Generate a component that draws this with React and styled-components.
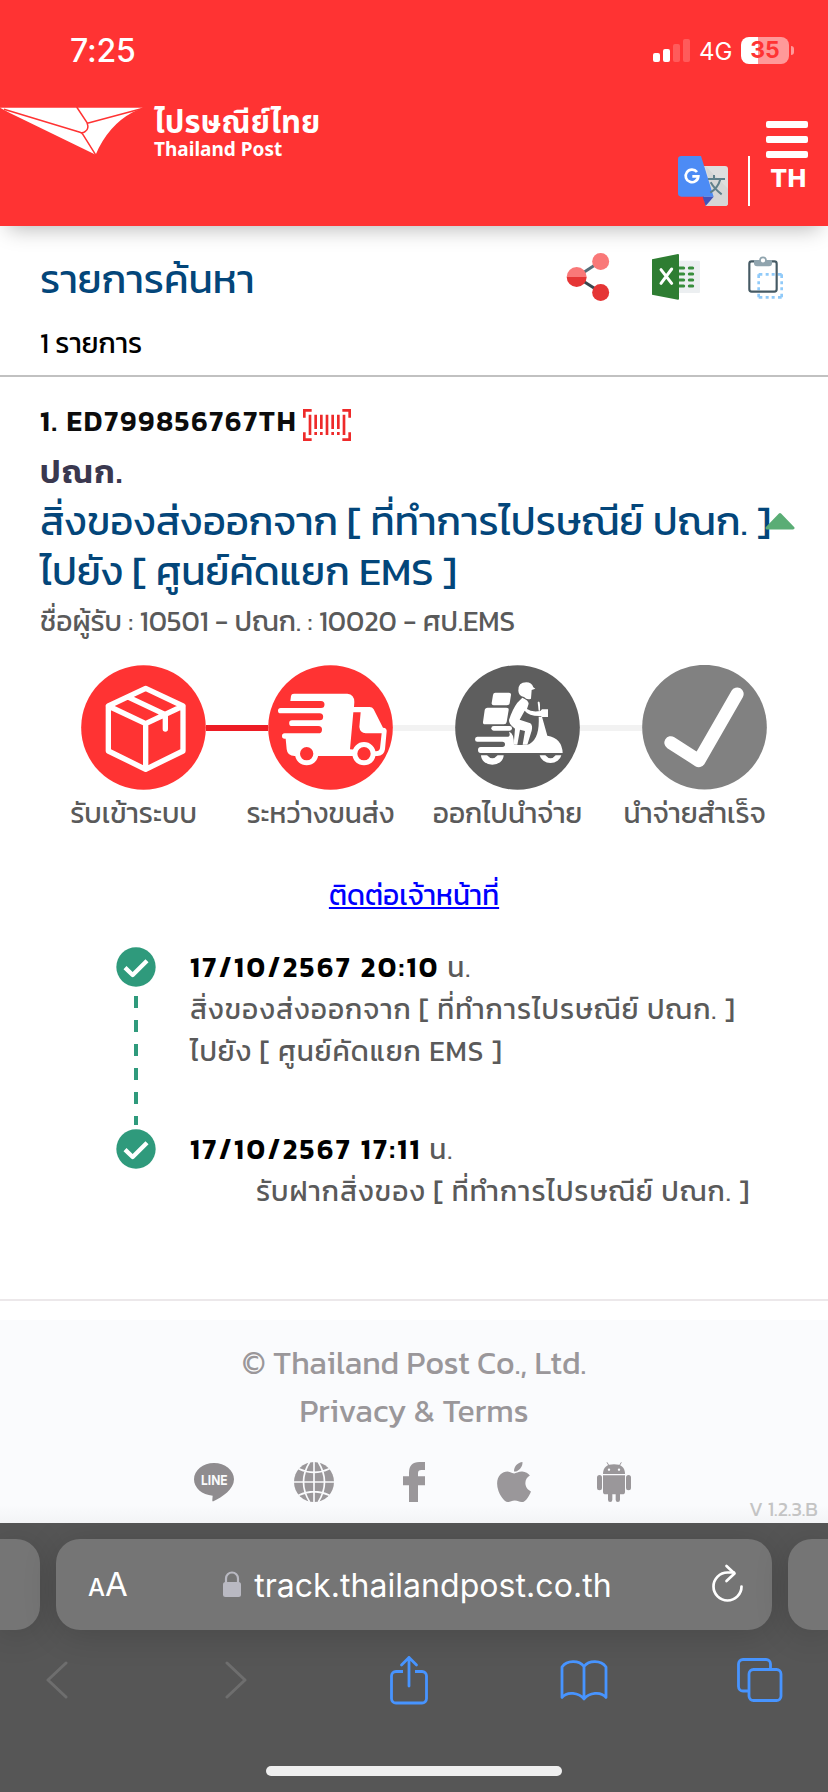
import styled, { createGlobalStyle } from "styled-components";
import { FaApple } from "react-icons/fa";

const App = () => {
    return (
        <Page>
            <GlobalStyle />
            <Header>
                <StatusBar>
                    <Clock>7:25</Clock>
                    <StatusIcons>
                        <SignalBar $height={9} />
                        <SignalBar $height={13} />
                        <SignalBar $height={18} $dim />
                        <SignalBar $height={23} $dim />
                        <Network>4G</Network>
                        <Battery>35</Battery>
                        <BatteryTip />
                    </StatusIcons>
                </StatusBar>
                <Nav>
                    <Brand>
                        <PostLogo />
                        <BrandText>
                            <BrandThai>ไปรษณีย์ไทย</BrandThai>
                            <BrandEnglish>Thailand Post</BrandEnglish>
                        </BrandText>
                    </Brand>
                    <NavActions>
                        <TranslateIcon />
                        <NavDivider />
                        <MenuColumn>
                            <MenuBar />
                            <MenuBar />
                            <MenuBar />
                            <Language>TH</Language>
                        </MenuColumn>
                    </NavActions>
                </Nav>
            </Header>

            <SearchHeader>
                <TitleRow>
                    <Title>รายการค้นหา</Title>
                    <Tools>
                        <ShareNodesIcon />
                        <ExcelIcon />
                        <ClipboardIcon />
                    </Tools>
                </TitleRow>
                <Count>1 รายการ</Count>
            </SearchHeader>

            <Item>
                <TrackingRow>
                    <TrackingNumber>1. ED799856767TH</TrackingNumber>
                    <BarcodeIcon />
                </TrackingRow>
                <Origin>ปณก.</Origin>
                <Status>
                    สิ่งของส่งออกจาก [ ที่ทำการไปรษณีย์ ปณก. ]
                    <br />
                    ไปยัง [ ศูนย์คัดแยก EMS ]
                </Status>
                <CollapseIcon />
                <Recipient>ชื่อผู้รับ : 10501 - ปณก. : 10020 - ศป.EMS</Recipient>
            </Item>

            <Steps>
                <BoxStep />
                <StepLine $done />
                <TruckStep />
                <StepLine />
                <ScooterStep />
                <StepLine />
                <CheckStep />
            </Steps>
            <StepLabels>
                <StepLabel>รับเข้าระบบ</StepLabel>
                <StepLabel>ระหว่างขนส่ง</StepLabel>
                <StepLabel>ออกไปนำจ่าย</StepLabel>
                <StepLabel>นำจ่ายสำเร็จ</StepLabel>
            </StepLabels>

            <ContactLink href="#">ติดต่อเจ้าหน้าที่</ContactLink>

            <Timeline>
                <Event>
                    <EventMark>
                        <CheckBadge />
                        <EventDash />
                    </EventMark>
                    <div>
                        <EventText>
                            <EventDate>17/10/2567 20:10</EventDate> น.
                        </EventText>
                        <EventText>สิ่งของส่งออกจาก [ ที่ทำการไปรษณีย์ ปณก. ]</EventText>
                        <EventText>ไปยัง [ ศูนย์คัดแยก EMS ]</EventText>
                    </div>
                </Event>
                <Event>
                    <EventMark>
                        <CheckBadge />
                    </EventMark>
                    <div>
                        <EventText>
                            <EventDate>17/10/2567 17:11</EventDate> น.
                        </EventText>
                        <EventText $indent>รับฝากสิ่งของ [ ที่ทำการไปรษณีย์ ปณก. ]</EventText>
                    </div>
                </Event>
            </Timeline>

            <Footer>
                <FooterText>© Thailand Post Co., Ltd.</FooterText>
                <FooterText>Privacy &amp; Terms</FooterText>
                <SocialRow>
                    <LineIcon />
                    <GlobeIcon />
                    <FacebookIcon />
                    <AppleBox>
                        <FaApple />
                    </AppleBox>
                    <AndroidIcon />
                </SocialRow>
                <Version>V 1.2.3.B</Version>
            </Footer>

            <Browser>
                <TabStrip>
                    <SideTab $side="left" />
                    <AddressBar>
                        <TextSize>
                            <small>A</small>A
                        </TextSize>
                        <Address>
                            <LockIcon />
                            <Domain>track.thailandpost.co.th</Domain>
                        </Address>
                        <ReloadIcon />
                    </AddressBar>
                    <SideTab $side="right" />
                </TabStrip>
                <Toolbar />
                <HomeIndicator />
            </Browser>
        </Page>
    );
};

/* icons */

const PostLogo = () => (
    <svg width="144" height="50" viewBox="0 320 432 150">
        <path d="M0 325H428L398 339Q325 378 287 466L28 340Z" fill="#fff" />
        <path
            d="M12 330L240 399Q246 401 249 406L288 468M230 323L261 370Q268 388 256 396Q250 401 243 400M262 372L430 327"
            fill="none"
            stroke="#f33"
            strokeWidth="4.5"
        />
    </svg>
);

const TranslateIcon = () => (
    <svg width="50" height="50" viewBox="0 0 150 150">
        <path d="M60 30H141Q150 30 150 39V141Q150 150 141 150H83Z" fill="#dedede" />
        <path d="M82 30L150 98V141Q150 150 141 150H83L107 122Z" fill="#d6d6d6" />
        <path d="M10 0H69L107 122H10Q0 122 0 112V10Q0 0 10 0Z" fill="#4c8bf5" />
        <path d="M74 122H107L83 150Z" fill="#4352b8" />
        <path d="M57 48A19 19 0 1 0 61 61H43" fill="none" stroke="#fff" strokeWidth="8" />
        <path d="M90 69H141M108 57V69M127 70Q120 96 97 110M98 79Q110 100 131 115" fill="none" stroke="#5f7f8a" strokeWidth="6" />
    </svg>
);

const ShareNodesIcon = () => (
    <svg width="48" height="48" viewBox="450 69 144 144">
        <path d="M488 141L560 94" stroke="#546e7a" strokeWidth="9" />
        <path d="M488 141L560 187" stroke="#37474f" strokeWidth="9" />
        <circle cx="560" cy="94.500" r="25.500" fill="#f97878" />
        <circle cx="560" cy="187.500" r="25.500" fill="#e53535" />
        <path d="M458 141A30 30 0 0 1 518 141Z" fill="#f97878" />
        <path d="M458 141A30 30 0 0 0 518 141Z" fill="#e53535" />
    </svg>
);

const ExcelIcon = () => (
    <svg width="48" height="48" viewBox="714 69 144 144">
        <rect x="790" y="92" width="68" height="97" rx="3" fill="#eceff1" />
        <path
            d="M792 114H809M826 114H836M792 132H809M826 132H836M792 150H809M826 150H836M792 168H809M826 168H836"
            stroke="#388e3c"
            strokeWidth="9"
            strokeLinecap="round"
        />
        <path d="M714 88L792 72Q795 72 795 75V206Q795 209 792 209L714 194Z" fill="#2e7d32" />
        <path d="M741 119L773 160M773 117L741 160" stroke="#fff" strokeWidth="9" strokeLinecap="round" />
    </svg>
);

const ClipboardIcon = () => (
    <svg width="48" height="48" viewBox="978 69 144 144">
        <path d="M1034 133H1103V202H1034Z" fill="none" stroke="#90caf9" strokeWidth="8" strokeDasharray="11 10 9 9 9 10 11 0" />
        <rect x="1006" y="94" width="82" height="91" rx="7" fill="none" stroke="#455a64" strokeWidth="6.500" />
        <path d="M1020 90H1074V100Q1074 109 1065 109H1029Q1020 109 1020 100Z" fill="#90a4ae" />
        <circle cx="1047" cy="91" r="9" fill="#fff" stroke="#90a4ae" strokeWidth="5" />
    </svg>
);

const BarcodeIcon = () => (
    <Barcode width="48" height="32" viewBox="0 0 144 96">
        <g fill="none" stroke="#ee2a2a" strokeWidth="8">
            <path d="M4 26V4H26M118 4H140V26M140 70V92H118M26 92H4V70" />
            <path d="M21 17V78M72 17V78M123 17V78M38 17V60M55 17V60M89 17V60M106 17V60M38 69V78M55 69V78M89 69V78M106 69V78" />
        </g>
    </Barcode>
);

const CollapseIcon = () => (
    <Collapse width="30" height="18" viewBox="0 0 30 18">
        <path d="M2 16L15 2.500L28 16Z" fill="#5aad75" stroke="#5aad75" strokeWidth="3" strokeLinejoin="round" />
    </Collapse>
);

const BoxStep = () => (
    <StepSvg viewBox="243 557 375 375">
        <circle cx="430.500" cy="744.500" r="187" fill="#f33" />
        <path
            d="M437 627L549 680V815L437 870L325 815V680ZM325 680L437 733L549 680M437 733V868M388 655L496 706V749"
            fill="none"
            stroke="#fff"
            strokeWidth="16"
            strokeLinecap="round"
            strokeLinejoin="round"
        />
    </StepSvg>
);

const TruckStep = () => (
    <StepSvg viewBox="12 17 375 375">
        <circle cx="199.500" cy="204.500" r="187" fill="#f33" />
        <path
            d="M90 103H250Q271 105 271 128L270 143H317Q325 143 329 150L357 205Q369 206 368 216L363 270Q360 290 340 290H92Q70 290 68 270L65 238H62A8 8 0 0 1 62 222H163A11 11 0 0 0 163 200H84A8.500 8.500 0 0 1 84 183H167A10.500 10.500 0 0 0 167 162H50A8 8 0 0 1 50 146H171A10.500 10.500 0 0 0 171 125H79L81 110Q82 103 90 103Z"
            fill="#fff"
        />
        <path d="M268 159H290L286 203Q288 221 305 222H353L348 267Q346 276 336 276L258 270Z" fill="#f33" />
        <circle cx="128" cy="283" r="27.500" fill="#f33" stroke="#fff" strokeWidth="15" />
        <circle cx="300" cy="283" r="27.500" fill="#f33" stroke="#fff" strokeWidth="15" />
    </StepSvg>
);

const ScooterStep = () => (
    <StepSvg viewBox="123 557 375 375">
        <circle cx="310.500" cy="744.500" r="187" fill="#5e5e5e" />
        <g fill="#fff">
            <path d="M313 634Q312 609 337 609Q353 609 358 624L364 628L353 632L351 658Q340 664 330 653Q314 650 313 634Z" />
            <path d="M325 655Q344 663 344 673L339 689Q352 699 379 695L384 690H402V713H384L380 710Q345 711 332 694L317 721L349 732Q357 739 353 754L340 796H326L333 755L318 751L310 796H299L303 748Q284 735 285 722Q295 690 310 670Z" />
            <path d="M244 640H285Q292 640 291 647L287 672Q286 678 279 678H239Q232 678 233 671L237 647Q238 640 244 640Z" />
            <path d="M221 685H277Q285 685 284 692L278 728Q277 735 270 735H213Q206 735 207 728L212 693Q213 685 221 685Z" />
            <rect x="232" y="740" width="62" height="14" rx="7" />
            <path d="M190 772H283Q290 770 285 757Q300 760 300 797H338Q378 785 374 712H384L400 769Q444 776 446 821H200Q192 821 192 812Q192 803 200 803H265Q273 803 273 795Q273 787 265 787H190Q183 787 183 779.500Q183 772 190 772Z" />
            <path d="M201 828A34 28 0 0 0 269 828H251Q235 846 219 828Z" />
            <path d="M377 828A33 28 0 0 0 442 828H425Q410 846 394 828Z" />
            <path d="M371 669Q377 662 378 676V694H374Z" />
        </g>
    </StepSvg>
);

const CheckStep = () => (
    <StepSvg viewBox="685.5 557 375 375">
        <circle cx="873" cy="743.500" r="187" fill="#818181" />
        <path d="M772 790L856 844L971 644" fill="none" stroke="#fff" strokeWidth="39" strokeLinecap="round" strokeLinejoin="round" />
    </StepSvg>
);

const CheckBadge = () => (
    <svg width="40" height="40" viewBox="0 0 120 120">
        <circle cx="60" cy="60" r="59" fill="#2f9a7c" />
        <path d="M27 62L50 84L93 41" fill="none" stroke="#fff" strokeWidth="13" strokeLinejoin="round" />
    </svg>
);

const LineIcon = () => (
    <svg width="40" height="40" viewBox="0 0 120 120">
        <path d="M60 3C93 3 120 25 120 52C120 82 85 105 58 118Q54 119 55 113L56 101C24 99 0 78 0 52C0 25 27 3 60 3Z" fill="#8f8c8f" />
        <text
            x="21"
            y="68"
            textLength="80"
            lengthAdjust="spacingAndGlyphs"
            fill="#fafbfd"
            fontFamily="Inter, sans-serif"
            fontWeight="700"
            fontSize="41"
        >
            LINE
        </text>
    </svg>
);

const GlobeIcon = () => (
    <svg width="40" height="40" viewBox="0 0 120 120">
        <circle cx="60" cy="60" r="60" fill="#9a979a" />
        <path
            d="M60 0V120M0 60H120M47 0Q10 60 47 120M73 0Q110 60 73 120M14 20Q60 42 106 20M14 100Q60 78 106 100"
            fill="none"
            stroke="#fafbfd"
            strokeWidth="5"
        />
    </svg>
);

const FacebookIcon = () => (
    <svg width="40" height="40" viewBox="0 0 120 120">
        <path d="M45 120V70H27V43H45V32Q45 0 76 0H93V24H82Q72 24 72 34V43H93V70H72V120Z" fill="#9a979a" />
    </svg>
);

const AndroidIcon = () => (
    <svg width="40" height="40" viewBox="0 0 120 120">
        <g fill="#9a979a">
            <path d="M27 36Q27 7 60 7Q93 7 93 36Z" />
            <path d="M27 40H93V89Q93 97 85 97H78V113Q78 120 71.500 120Q65 120 65 113V97H55V113Q55 120 48.500 120Q42 120 42 113V97H35Q27 97 27 89Z" />
            <rect x="9" y="39" width="15" height="46" rx="7.500" />
            <rect x="96" y="39" width="15" height="46" rx="7.500" />
        </g>
        <path d="M39 1L46 13M82 1L75 13" stroke="#9a979a" strokeWidth="3" />
        <circle cx="45" cy="23" r="3.500" fill="#fafbfd" />
        <circle cx="75" cy="23" r="3.500" fill="#fafbfd" />
    </svg>
);

const LockIcon = () => (
    <svg width="18" height="27" viewBox="0 0 18 27">
        <rect y="11" width="18" height="15" rx="2.500" fill="#b9b9c2" />
        <path d="M3 12V7.500A6 6 0 0 1 15 7.500V12" fill="none" stroke="#b9b9c2" strokeWidth="2.200" />
    </svg>
);

const ReloadIcon = () => (
    <Reload width="32" height="38" viewBox="0 0 32 38">
        <path d="M29.500 22.500A14 14 0 1 1 15.500 8.500H22" />
        <path d="M14.500 2L22.500 9.500L14.500 17" />
    </Reload>
);

const Toolbar = () => (
    <ToolbarRow>
        <Chevron width="22" height="40" viewBox="0 0 22 40">
            <path d="M20 3L2 20L20 37" />
        </Chevron>
        <Chevron width="22" height="40" viewBox="0 0 22 40">
            <path d="M2 3L20 20L2 37" />
        </Chevron>
        <BlueIcon width="38" height="50" viewBox="0 0 38 50">
            <path d="M13 16.500H6A4.500 4.500 0 0 0 1.500 21V43.500A4.500 4.500 0 0 0 6 48H32A4.500 4.500 0 0 0 36.500 43.500V21A4.500 4.500 0 0 0 32 16.500H25" />
            <path d="M19 31V2.500M11.500 10L19 2.500L26.500 10" strokeLinecap="round" />
        </BlueIcon>
        <BlueIcon width="48" height="42" viewBox="0 0 48 42">
            <path d="M24 40C19 33.500 7 32 2 38.500V8C7 1 19 1 24 7.500V40C29 33.500 41 32 46 38.500V8C41 1 29 1 24 7.500" />
        </BlueIcon>
        <BlueIcon width="46" height="44" viewBox="0 0 46 44">
            <rect x="12" y="11.500" width="32" height="31" rx="4.500" />
            <path d="M11 33H6A4.500 4.500 0 0 1 1.500 28.500V6A4.500 4.500 0 0 1 6 1.500H29A4.500 4.500 0 0 1 33.500 6V10" />
        </BlueIcon>
    </ToolbarRow>
);

/* styles */

const GlobalStyle = createGlobalStyle`
  body {
    margin: 0;
    background-color: white;
    font-family: Kanit, "Noto Sans Thai", "Noto Sans", sans-serif;
    font-size: 28px;
    line-height: 42px;
    color: #5a5a5a;
  }
  svg {
    display: block;
    flex-shrink: 0;
  }
`;

const Page = styled.div`
  width: 828px;
  height: 1792px;
  display: flex;
  flex-direction: column;
  overflow: hidden;
`;

const Header = styled.header`
  height: 226px;
  background-color: #ff3333;
  box-shadow: 0 11px 20px -8px rgba(0, 0, 0, 0.28);
`;

const StatusBar = styled.div`
  height: 100px;
  padding: 0 34px 0 70px;
  display: flex;
  justify-content: space-between;
  align-items: center;
  color: white;
  font-family: Inter, "Liberation Sans", sans-serif;
`;

const Clock = styled.span`
  padding-top: 1px;
  font-size: 32px;
  font-weight: 500;
  letter-spacing: -0.2px;
`;

const StatusIcons = styled.div`
  display: flex;
  align-items: flex-end;
  height: 23px;
`;

const SignalBar = styled.span`
  width: 7px;
  height: ${(p) => p.$height}px;
  margin-right: 3px;
  border-radius: 2px;
  background-color: ${(p) => (p.$dim ? "rgba(255, 255, 255, 0.2)" : "white")};
`;

const Network = styled.span`
  margin-left: 6px;
  width: 42px;
  font-size: 24px;
  line-height: 20px;
  font-weight: 400;
`;

const Battery = styled.span`
  width: 48px;
  height: 27px;
  margin-bottom: -2px;
  border-radius: 8px;
  background: linear-gradient(to right, white 17px, rgba(255, 255, 255, 0.5) 17px);
  color: #ff3333;
  font-size: 23px;
  font-weight: 700;
  line-height: 27px;
  text-align: center;
`;

const BatteryTip = styled.span`
  width: 3px;
  height: 9px;
  margin: 0 0 7px 2px;
  border-radius: 0 4px 4px 0;
  background-color: rgba(255, 255, 255, 0.5);
`;

const Nav = styled.nav`
  height: 126px;
  display: flex;
  justify-content: space-between;
`;

const Brand = styled.div`
  display: flex;
  padding-top: 6px;
  gap: 10px;
`;

const BrandText = styled.div`
  display: flex;
  flex-direction: column;
  padding-top: 1px;
  color: white;
  font-weight: 700;
`;

const BrandThai = styled.span`
  font-family: "Noto Sans Thai", "Noto Sans", sans-serif;
  font-size: 31px;
  line-height: 34px;
  letter-spacing: 0.1px;
`;

const BrandEnglish = styled.span`
  margin-top: -3px;
  font-family: "Noto Sans", sans-serif;
  font-size: 19px;
  line-height: 22px;
`;

const NavActions = styled.div`
  display: flex;
  align-items: flex-end;
  padding: 0 20px 20px 0;
`;

const NavDivider = styled.span`
  width: 2px;
  height: 50px;
  margin: 0 16px 0 20px;
  background-color: white;
`;

const MenuColumn = styled.div`
  width: 42px;
  height: 86px;
  display: flex;
  flex-direction: column;
  align-items: center;
  gap: 8px;
`;

const MenuBar = styled.span`
  width: 42px;
  height: 7px;
  border-radius: 2px;
  background-color: white;
  margin-top: 1px;
  margin-bottom: -1px;
`;

const Language = styled.span`
  margin-left: 3px;
  color: white;
  font-family: Inter, "Open Sans", sans-serif;
  font-size: 25px;
  font-weight: 800;
  line-height: 26px;
  letter-spacing: 0.4px;
`;

const SearchHeader = styled.section`
  height: 149px;
  border-bottom: 2px solid #c1c1c1;
`;

const TitleRow = styled.div`
  display: flex;
  justify-content: space-between;
  padding: 27px 40px 0;
`;

const Title = styled.h1`
  margin: 1px 0 0;
  font-size: 40px;
  font-weight: 400;
  line-height: 50px;
  color: #03467a;
`;

const Tools = styled.div`
  display: flex;
  gap: 40px;
`;

const Count = styled.p`
  margin: 18px 40px 0;
  color: black;
`;

const Item = styled.section`
  position: relative;
  height: 265px;
  padding: 23px 0 0 40px;
  white-space: nowrap;
`;

const TrackingRow = styled.div`
  display: flex;
  align-items: center;
  gap: 6px;
`;

const TrackingNumber = styled.span`
  color: #0c0c0c;
  font-weight: 600;
  letter-spacing: 1.8px;
`;

const Barcode = styled.svg`
  margin-top: 8px;
`;

const Origin = styled.h2`
  margin: 5px 0 -1px;
  font-size: 32px;
  font-weight: 600;
  line-height: 50px;
  color: #3a384f;
  letter-spacing: 1.6px;
`;

const Status = styled.p`
  margin: 0;
  font-size: 40px;
  line-height: 50px;
  color: #03467a;
`;

/* arrow sits over the end of the status text */
const Collapse = styled.svg`
  position: absolute;
  top: 135px;
  right: 33px;
`;

const Recipient = styled.p`
  margin: 4px 0 0;
`;

const Steps = styled.div`
  height: 125px;
  display: flex;
  align-items: center;
  padding-left: 81px;
`;

const StepSvg = styled.svg`
  width: 125px;
  height: 125px;
`;

const StepLine = styled.span`
  width: 62px;
  height: 6px;
  background-color: ${(p) => (p.$done ? "#ed1c24" : "#f2f2f2")};
`;

const StepLabels = styled.div`
  display: grid;
  grid-template-columns: repeat(4, 187px);
  padding: 2px 0 0 40px;
`;

const StepLabel = styled.span`
  text-align: center;
  white-space: nowrap;
`;

const ContactLink = styled.a`
  align-self: center;
  margin-top: 40px;
  color: #0000ff;
`;

const Timeline = styled.ol`
  margin: 30px 0 0;
  padding: 0 0 0 116px;
  height: 353px;
  border-bottom: 2px solid #ece8ea;
  list-style: none;
`;

const Event = styled.li`
  height: 182px;
  display: flex;
  gap: 34px;
  white-space: nowrap;
`;

const EventMark = styled.div`
  display: flex;
  flex-direction: column;
  align-items: center;
  padding-top: 1px;
`;

const EventDash = styled.span`
  width: 4px;
  height: 129px;
  margin-top: 9px;
  background: repeating-linear-gradient(#2f9a7c 0 12px, transparent 12px 24px);
`;

const EventText = styled.p`
  margin: 0;
  padding-left: ${(p) => (p.$indent ? 66 : 0)}px;
  letter-spacing: 1px;
`;

const EventDate = styled.b`
  color: black;
  font-weight: 600;
  letter-spacing: 2.5px;
`;

const Footer = styled.footer`
  height: 184px;
  margin-top: 19px;
  padding-top: 19px;
  display: flex;
  flex-direction: column;
  align-items: center;
  background: linear-gradient(#fafbfd 185px, #f3f4f6);
`;

const FooterText = styled.p`
  margin: 0;
  font-size: 32px;
  line-height: 48px;
  color: #9a979a;
`;

const SocialRow = styled.div`
  display: flex;
  gap: 60px;
  margin-top: 27px;
`;

const AppleBox = styled.span`
  width: 40px;
  height: 40px;
  display: flex;
  align-items: center;
  justify-content: center;
  color: #9a979a;
  font-size: 46px;
`;

const Version = styled.span`
  align-self: flex-end;
  margin: -6px 10px 0 0;
  font-size: 20px;
  line-height: 26px;
  color: #c4c4c4;
`;

const Browser = styled.div`
  height: 269px;
  display: flex;
  flex-direction: column;
  align-items: center;
  background-color: #565656;
  overflow: hidden;
`;

const TabStrip = styled.div`
  width: 100%;
  display: flex;
  justify-content: space-between;
  margin-top: 16px;
`;

const SideTab = styled.span`
  width: 40px;
  height: 91px;
  border-radius: ${(p) => (p.$side === "left" ? "0 24px 24px 0" : "24px 0 0 24px")};
  background-color: #757575;
  box-shadow: 0 4px 34px rgba(0, 0, 0, 0.16);
`;

const AddressBar = styled.div`
  width: 716px;
  height: 91px;
  box-sizing: border-box;
  padding: 0 28px 0 32px;
  display: flex;
  align-items: center;
  justify-content: space-between;
  border-radius: 24px;
  background-color: #757575;
  box-shadow: 0 4px 34px rgba(0, 0, 0, 0.16);
  color: white;
  font-family: Inter, "Liberation Sans", sans-serif;
  font-size: 32px;
`;

const TextSize = styled.span`
  font-size: 33px;
  padding-top: 3px;
  small {
    font-size: 24px;
    font-weight: 500;
  }
`;

const Address = styled.span`
  display: flex;
  align-items: center;
  gap: 13px;
  margin-right: 5px;
`;

const Domain = styled.span`
  padding-top: 2px;
  letter-spacing: 0.05px;
`;

const Reload = styled.svg`
  fill: none;
  stroke: white;
  stroke-width: 2.7px;
  stroke-linecap: round;
  stroke-linejoin: round;
  margin-bottom: 3px;
`;

const ToolbarRow = styled.div`
  width: 737px;
  height: 50px;
  margin-top: 25px;
  display: grid;
  grid-template-columns: 179px 165px 170px 177px 46px;
  align-items: center;
`;

const Chevron = styled.svg`
  fill: none;
  stroke: #6e6e6e;
  stroke-width: 3px;
  stroke-linecap: round;
  stroke-linejoin: round;
`;

const BlueIcon = styled.svg`
  fill: none;
  stroke: #4794ff;
  stroke-width: 2.8px;
  stroke-linejoin: round;
`;

const HomeIndicator = styled.span`
  width: 296px;
  height: 10px;
  margin-top: 61px;
  border-radius: 5px;
  background-color: #efefef;
`;

export default App;
